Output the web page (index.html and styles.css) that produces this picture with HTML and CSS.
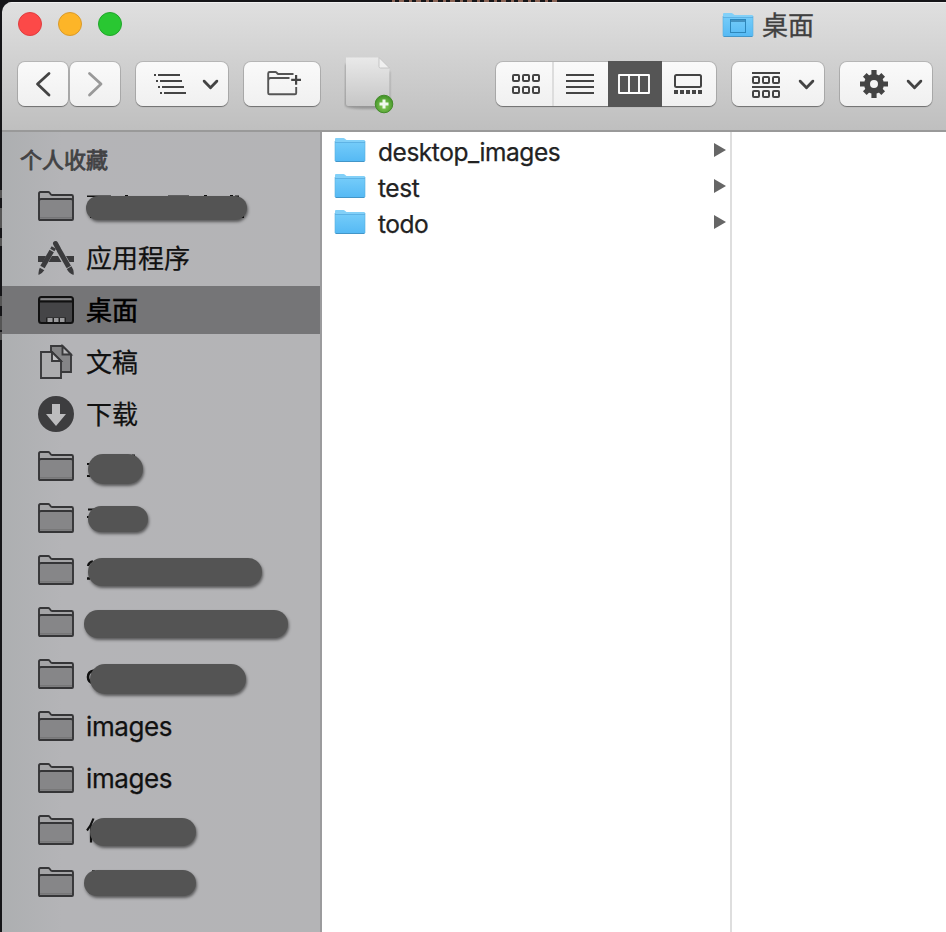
FILE: index.html
```html
<!DOCTYPE html>
<html lang="zh-CN">
<head>
<meta charset="utf-8">
<title>桌面</title>
<link rel="stylesheet" href="styles.css">
</head>
<body>
<svg class="defs" width="0" height="0" aria-hidden="true">
  <defs>
    <linearGradient id="blue" x1="0" y1="0" x2="0" y2="1"><stop offset="0" stop-color="#73cbf9"/><stop offset="1" stop-color="#55b9f4"/></linearGradient>
    <linearGradient id="paper" x1="0" y1="0" x2="0" y2="1"><stop offset="0" stop-color="#e9e9e9"/><stop offset="1" stop-color="#c6c6c6"/></linearGradient>
    <radialGradient id="green" cx=".5" cy=".6" r=".55"><stop offset="0" stop-color="#8ed05c"/><stop offset="1" stop-color="#45962a"/></radialGradient>
    <filter id="soft" x="-20%" y="-20%" width="140%" height="140%"><feGaussianBlur stdDeviation="1.3"/></filter>
    <symbol id="folder" viewBox="0 0 36 30">
      <path d="M1 28V2.400Q1 1 2.400 1H10.400Q11.300 1 11.900 2.200Q12.700 4 14 4H33.500Q35 4 35 5.500V28Q35 29 34 29H2Q1 29 1 28Z" fill="#a4a4a6"/>
      <path d="M1 8.500H35V29H1Z" fill="#868688"/>
      <path d="M2 26.800H34" stroke="#757577" stroke-width="1.400"/>
      <path d="M1 28V2.400Q1 1 2.400 1H10.400Q11.300 1 11.900 2.200Q12.700 4 14 4H33.500Q35 4 35 5.500V28Q35 29 34 29H2Q1 29 1 28ZM1 10Q1 8 3 8H33Q35 8 35 10" fill="none" stroke="#353537" stroke-width="1.900"/>
    </symbol>
    <symbol id="bluefolder" viewBox="0 0 32 26">
      <path d="M1 24V2Q1 1 2 1H9.500Q10.300 1 11 1.800L12.500 3H30Q31 3 31 4V24Z" fill="#82d0f8"/>
      <path d="M1 6H31V23.600Q31 24.500 30 24.500H2Q1 24.500 1 23.600Z" fill="url(#blue)"/>
      <path d="M1 5.500H31" stroke="#55abe0" stroke-width=".8"/>
      <path d="M1.500 24.500H30.500" stroke="#4396c8" stroke-width="1.200"/>
      <path d="M1 4V24M31 4V24" stroke="#58aedd" stroke-width=".6"/>
    </symbol>
    <symbol id="chev" viewBox="0 0 16 10"><path d="M1.500 1.500L8 8.300L14.500 1.500" fill="none" stroke="#444" stroke-width="2.800" stroke-linecap="round"/></symbol>
    <symbol id="six" viewBox="0 0 28 8"><g fill="none" stroke="#444" stroke-width="2"><rect x="1" y="1" width="6" height="6" rx="1"/><rect x="11" y="1" width="6" height="6" rx="1"/><rect x="21" y="1" width="6" height="6" rx="1"/></g></symbol>
  </defs>
</svg>
<div class="window">
  <header class="chrome">
    <div class="titlebar">
      <div class="lights"><i class="light red"></i><i class="light amber"></i><i class="light green"></i></div>
      <div class="title">
        <svg width="32" height="26"><use href="#bluefolder"/><rect x="8.500" y="7.500" width="15" height="13" fill="none" stroke="#2d86ba" stroke-width="1"/><path d="M9 9H23" stroke="#347fae" stroke-width="1.600"/></svg>
        <span>桌面</span>
      </div>
    </div>
    <div class="toolbar">
      <div class="btn w50"><svg width="50" height="44"><path d="M31 11.500L19.500 22L31 33" fill="none" stroke="#444" stroke-width="2.800" stroke-linecap="round" stroke-linejoin="round"/></svg></div>
      <div class="btn w50 next"><svg width="50" height="44"><path d="M19.500 11.500L31 22L19.500 33" fill="none" stroke="#999" stroke-width="2.800" stroke-linecap="round" stroke-linejoin="round"/></svg></div>
      <div class="btn w92 gap16"><svg width="92" height="44"><path d="M18 13h2m2 0h22M20 19h2m2 0h22M22 25h2m2 0h22M24 31h2m2 0h22" stroke="#444" stroke-width="2"/><use href="#chev" x="66.500" y="17.500" width="16" height="10"/></svg></div>
      <div class="btn w76 gap16"><svg width="76" height="44"><g fill="none" stroke="#555" stroke-width="1.900"><path d="M52.200 25V31Q52.200 32.300 51 32.300H25.500Q24.200 32.300 24.200 31V11.500Q24.200 10 25.700 10H31.500Q32.500 10 33 11Q33.500 12 34.500 12H49.500M24.200 18.500Q24.200 16 26.500 16H45.500"/><path d="M47.200 17.800H57M52.100 13V22.800" stroke="#444" stroke-width="2.200"/></g></svg></div>
      <svg class="newfile" width="52" height="64">
        <path d="M1.500 12H30L46 20V53Q46 57 24 57Q1 57 1 53Z" fill="#777" opacity=".6" filter="url(#soft)"/>
        <path d="M2 5.500H35L45.500 16V52Q45.500 54 43.500 54H4Q2 54 2 52Z" fill="url(#paper)"/>
        <path d="M35 5.500V14.500Q35 16 36.500 16H45.500Z" fill="#f0f0f0" stroke="#bbb" stroke-width=".8"/>
        <circle cx="40" cy="52" r="8.800" fill="url(#green)" stroke="#438b29" stroke-width="1"/>
        <path d="M35.500 52H44.500M40 47.500V56.500" stroke="#f1f8ed" stroke-width="3"/>
      </svg>
      <div class="segments">
        <div class="seg first"><svg width="56" height="44"><use href="#six" x="16" y="12" width="28" height="8"/><use href="#six" x="16" y="24" width="28" height="8"/></svg></div>
        <div class="seg"><svg width="54" height="44"><path d="M12 13H40M12 19H40M12 25H40M12 31H40" stroke="#444" stroke-width="2"/></svg></div>
        <div class="seg active"><svg width="54" height="46"><path d="M11 14H41V32H11ZM21 14V32M31 14V32" fill="none" stroke="#fff" stroke-width="1.900" stroke-linejoin="round"/></svg></div>
        <div class="seg"><svg width="54" height="44"><rect x="13" y="13" width="26" height="12" rx="1.500" fill="none" stroke="#444" stroke-width="2"/><path d="M12 30H40" stroke="#444" stroke-width="4" stroke-dasharray="4 2"/></svg></div>
      </div>
      <div class="btn w92 gap16"><svg width="92" height="44"><path d="M20 11H48M20 25H48" stroke="#444" stroke-width="2"/><use href="#six" x="20" y="14" width="28" height="8"/><use href="#six" x="20" y="28" width="28" height="8"/><use href="#chev" x="66.500" y="17.500" width="16" height="10"/></svg></div>
      <div class="btn w92 gap16"><svg width="92" height="44"><g transform="translate(34 22)"><circle r="7" fill="none" stroke="#444" stroke-width="6"/><g stroke="#444" stroke-width="5.200"><path d="M0-14V-8M0 14V8M-14 0H-8M14 0H8"/><path d="M0-13V-8M0 13V8M-13 0H-8M13 0H8" transform="rotate(45)"/></g></g><use href="#chev" x="66.500" y="17.500" width="16" height="10"/></svg></div>
    </div>
  </header>
  <main class="content">
    <nav class="sidebar">
      <h2>个人收藏</h2>
      <ul class="places">
        <li><svg class="ic"><use href="#folder"/></svg><span class="masked"><svg class="bits" width="170" height="48"><path d="M1 14.300H25M82 14.300H103" stroke="#111" stroke-width="1.600"/><path d="M39 14h3M118 14h3M144 14h3M149 14.500h4M4 35h5M153 35h5" stroke="#111" stroke-width="2"/></svg><b class="pill p1"></b></span></li>
        <li><svg class="ic tall" viewBox="0 0 36 36"><path d="M0 16H8L5 22H0ZM14 16H20L23.500 22H10.500ZM28 16H36V22H31.500Z" fill="#3b3b3d"/><g stroke="#3b3b3d" stroke-width="5" fill="none"><path d="M17.500 3.500L20.500 9" stroke-linecap="round"/><path d="M21 10L30.800 27"/><path d="M15.800 7.500L14.300 10"/><path d="M13.700 11L4.500 27"/></g><path d="M28.800 29L33.500 26.300Q36.500 31 35.500 35Q31 33.500 28.800 29ZM1.800 27.800L6.300 30.300Q4 33.700.6 35Q0 31.500 1.800 27.800Z" fill="#3b3b3d"/></svg><span>应用程序</span></li>
        <li class="selected"><svg class="ic" viewBox="0 0 36 30"><rect x="1" y="2" width="34" height="26" rx="2.500" fill="#454547" stroke="#111" stroke-width="2"/><path d="M2.500 4.200H33.500" stroke="#858587" stroke-width="2"/><path d="M1 6.500H35" stroke="#111" stroke-width="2"/><path d="M8 22.500H28V27H8Z" fill="#222"/><path d="M9.500 25H14.500M16 25H20.500M22 25H26.500" stroke="#9b9b9d" stroke-width="4"/></svg><span>桌面</span></li>
        <li><svg class="ic tall" viewBox="0 0 36 36"><g stroke="#39393b" stroke-width="1.900"><path d="M13 2H24.500L33 10.500V28H13Z" fill="#858587"/><path d="M24.500 2V10.500H33Z" fill="#b5b5b7"/><path d="M3 8H14L23 17V34H3Z" fill="#acacae"/><path d="M14 8V17H23Z" fill="#c2c2c4"/></g></svg><span>文稿</span></li>
        <li><svg class="ic tall" viewBox="0 0 36 36"><circle cx="18" cy="18" r="18" fill="#3d3d3f"/><path d="M14 8H22V18H28L18 30L8 18H14Z" fill="#bcbcbe"/></svg><span>下载</span></li>
        <li><svg class="ic"><use href="#folder"/></svg><span class="masked"><svg class="bits" width="70" height="48"><path d="M1 22h3M1 34h3M46 13.500h3" stroke="#111" stroke-width="2"/></svg><b class="pill p2"></b></span></li>
        <li><svg class="ic"><use href="#folder"/></svg><span class="masked"><svg class="bits" width="70" height="48"><path d="M2 15.500h7M1 23h3" stroke="#111" stroke-width="2"/></svg><b class="pill p3"></b></span></li>
        <li><svg class="ic"><use href="#folder"/></svg><span class="masked"><svg class="bits" width="70" height="48"><path d="M2 20Q3 16 7 15.500M1 32.500h3" fill="none" stroke="#111" stroke-width="2.400"/></svg><b class="pill p4"></b></span></li>
        <li><svg class="ic"><use href="#folder"/></svg><span class="masked"><b class="pill p5"></b></span></li>
        <li><svg class="ic"><use href="#folder"/></svg><span class="masked"><svg class="bits" width="20" height="48"><path d="M8 20.500Q2 21.500 2 27Q2 32.500 8 33.500" fill="none" stroke="#111" stroke-width="2.600"/></svg><b class="pill p6"></b></span></li>
        <li class="latin"><svg class="ic"><use href="#folder"/></svg><span>images</span></li>
        <li class="latin"><svg class="ic"><use href="#folder"/></svg><span>images</span></li>
        <li><svg class="ic"><use href="#folder"/></svg><span class="masked"><svg class="bits" width="20" height="48"><path d="M7.500 12.500Q5 19.500 1 24.500M5 19V36.500" fill="none" stroke="#111" stroke-width="2.200"/></svg><b class="pill p7"></b></span></li>
        <li><svg class="ic"><use href="#folder"/></svg><span class="masked"><svg class="bits" width="20" height="48"><path d="M6 13h3M3 34.500h2" stroke="#111" stroke-width="1.600"/></svg><b class="pill p8"></b></span></li>
      </ul>
    </nav>
    <ul class="column">
      <li><svg width="32" height="26"><use href="#bluefolder"/></svg><span>desktop_images</span><i class="arrow"></i></li>
      <li><svg width="32" height="26"><use href="#bluefolder"/></svg><span>test</span><i class="arrow"></i></li>
      <li><svg width="32" height="26"><use href="#bluefolder"/></svg><span>todo</span><i class="arrow"></i></li>
    </ul>
    <div class="preview"></div>
  </main>
</div>
</body>
</html>
```
FILE: styles.css
```css
* { box-sizing: border-box; }
html, body { margin: 0; height: 100%; }
body {
  overflow: hidden;
  padding: 2px 0 0 2px;
  font-family: Inter, "Noto Sans CJK SC", sans-serif;
  background-color: #151518;
  background-image:
    repeating-linear-gradient(90deg, #8a6355 0 3px, transparent 3px 7px, #8a6355 7px 12px, transparent 12px 17px),
    linear-gradient(#555 0 8px, transparent 8px 18px, #555 18px 38px, transparent 38px 48px, #555 48px 56px),
    linear-gradient(#555 0 10px, transparent 10px 20px, #555 20px 34px, transparent 34px 36px, #555 36px 44px);
  background-size: 165px 2px, 2px 56px, 2px 44px;
  background-position: 392px 0, 0 190px, 0 296px;
  background-repeat: no-repeat;
}
.defs { position: absolute; }
svg { display: block; flex: none; }
ul { list-style: none; margin: 0; padding: 0; }
.window {
  display: flex;
  flex-direction: column;
  height: 930px;
  border-radius: 10px 0 0 0;
  overflow: hidden;
}
.chrome {
  flex: none;
  height: 130px;
  border-bottom: 2px solid #999;
  background: linear-gradient(#e0e0e0, #bfbfbf);
  box-shadow: inset 0 1px #f0f0f0;
}
.titlebar {
  display: flex;
  align-items: center;
  height: 44px;
  padding-left: 16px;
}
.lights { display: flex; gap: 16px; width: 704px; }
.light { width: 24px; height: 24px; border-radius: 50%; border: 1px solid; }
.red { background: #fc4948; border-color: #df3d3f; }
.amber { background: #fdb528; border-color: #d99a2c; }
.green { background: #29c732; border-color: #21a52b; }
.title { display: flex; align-items: center; gap: 8px; font-size: 26px; line-height: 40px; color: #404040; -webkit-text-stroke: .35px; }
.title svg { margin-top: 2px; }
.title span { padding-top: 3px; }
.toolbar { display: flex; padding: 16px 14px 0 16px; }
.btn, .segments {
  display: flex;
  flex: none;
  height: 44px;
  border-radius: 7px;
  background: linear-gradient(#fafafa, #f0f0f0);
  box-shadow: 0 0 0 1px rgba(0, 0, 0, .13), 0 1px 1px rgba(0, 0, 0, .35);
}
.w50 { width: 50px; }
.w76 { width: 76px; }
.w92 { width: 92px; }
.next { margin-left: 2px; }
.gap16 { margin-left: 16px; }
.newfile { margin: -10px 0 -10px 24px; }
.segments { margin-left: 100px; width: 220px; }
.seg { width: 54px; }
.seg.first { width: 58px; border-right: 2px solid #ddd; }
.seg.active { background: #555; margin: -1px 0; }
.content { display: flex; flex: 1; min-height: 0; background: #fff; }
.sidebar {
  flex: none;
  width: 320px;
  border-right: 2px solid #9b9b9d;
  background: linear-gradient(90deg, #adafb1, #b4b4b7 60px, #b4b4b6);
}
h2 { margin: 0; padding: 8px 0 0 18px; height: 50px; font-size: 22px; line-height: 40px; font-weight: 400; -webkit-text-stroke: .8px; color: #424244; }
.places { display: grid; gap: 4px; }
.places li {
  display: flex;
  align-items: center;
  gap: 12px;
  height: 48px;
  padding-left: 36px;
  font-size: 26px;
  line-height: 40px;
  color: #111;
  -webkit-text-stroke: .25px;
}
.places li > span:not(.masked) { padding-top: 2px; }
.places .latin { letter-spacing: -.4px; }
.places .selected { background: #757577; color: #000; -webkit-text-stroke: .6px; }
.ic { width: 36px; height: 30px; }
.tall { height: 36px; }
.masked { position: relative; align-self: stretch; width: 220px; }
.bits { position: absolute; left: 0; top: 0; }
.pill {
  position: absolute;
  border-radius: 15px;
  background: #545454;
  box-shadow: 1px 2px 3px rgba(0, 0, 0, .5);
}
.p1 { left: 0; top: 14px; width: 161px; height: 24px; }
.p2 { left: 2px; top: 12px; width: 55px; height: 30px; }
.p3 { left: 2px; top: 12px; width: 60px; height: 26px; }
.p4 { left: 2px; top: 12px; width: 174px; height: 28px; }
.p5 { left: -2px; top: 12px; width: 204px; height: 28px; }
.p6 { left: 4px; top: 14px; width: 156px; height: 30px; }
.p7 { left: 4px; top: 12px; width: 106px; height: 28px; }
.p8 { left: -2px; top: 12px; width: 112px; height: 26px; }
.column { flex: none; width: 410px; border-right: 2px solid #dedede; }
.column li {
  display: flex;
  align-items: center;
  height: 36px;
  padding: 0 4px 0 12px;
  gap: 12px;
  font-size: 24.5px;
  letter-spacing: -.45px;
  color: #222;
  -webkit-text-stroke: .25px;
}
.column span { padding-top: 3px; }
.arrow {
  margin-left: auto;
  border: solid transparent;
  border-width: 7px 0 7px 12px;
  border-left-color: #666;
}
```
